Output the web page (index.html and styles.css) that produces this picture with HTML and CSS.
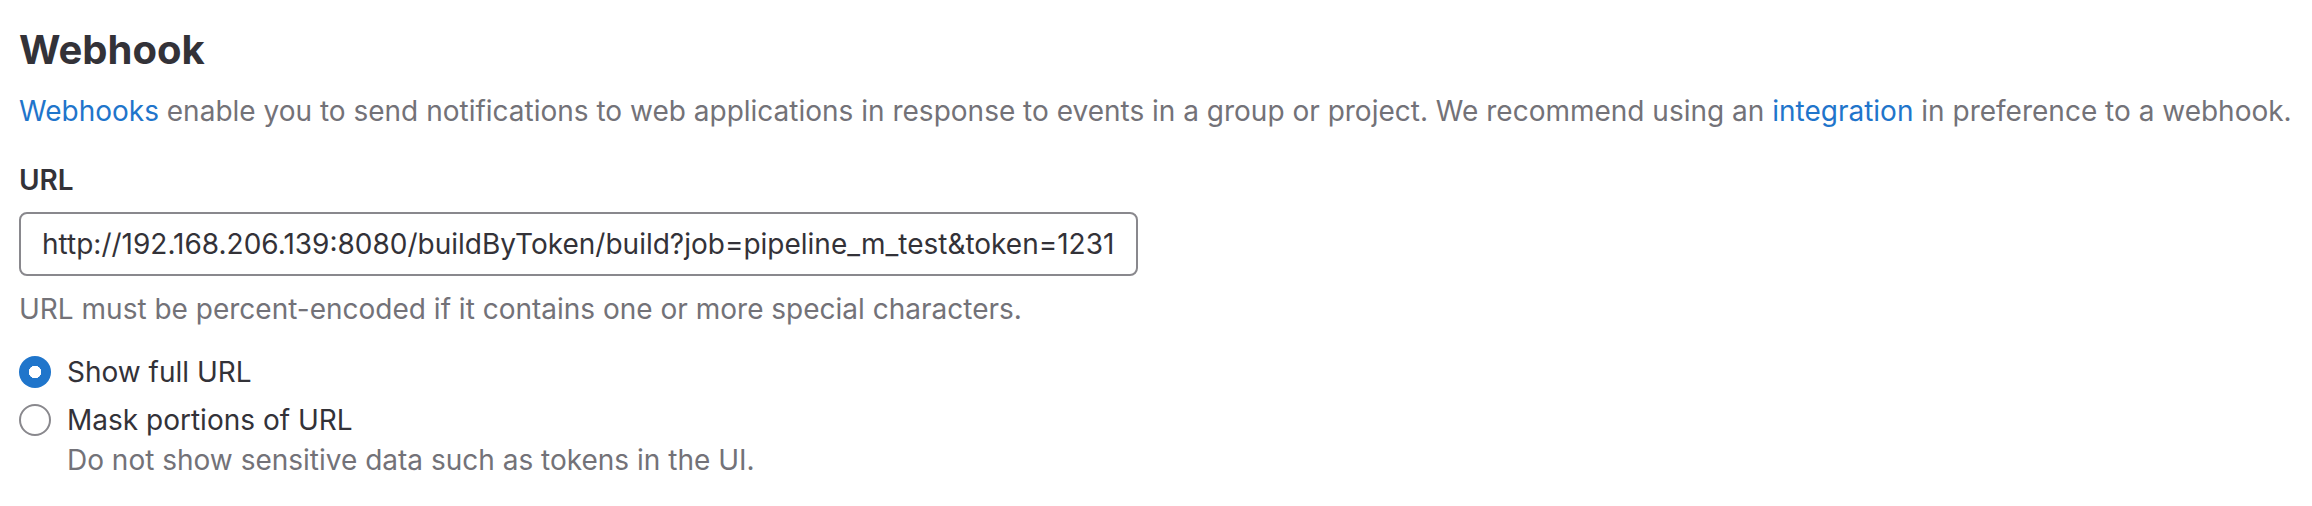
FILE: index.html
```html
<!DOCTYPE html>
<html lang="en">
<head>
<meta charset="utf-8">
<title>Webhook</title>
<link rel="stylesheet" href="styles.css">
</head>
<body>
<main class="page">
  <h2 class="title">Webhook</h2>
  <p class="intro"><a href="#" class="link">Webhooks</a> enable you to send notifications to web applications in response to events in a group or project. We recommend using an <a href="#" class="link">integration</a> in preference to a webhook.</p>
  <div class="field">
    <label class="label" for="url">URL</label>
    <input class="input" id="url" type="text" value="http://192.168.206.139:8080/buildByToken/build?job=pipeline_m_test&amp;token=123123">
    <p class="help">URL must be percent-encoded if it contains one or more special characters.</p>
  </div>
  <div class="radios">
    <label class="radio">
      <span class="dot checked"></span>
      <span class="radio-text">Show full URL</span>
    </label>
    <label class="radio">
      <span class="dot"></span>
      <span class="radio-body">
        <span class="radio-text">Mask portions of URL</span>
        <span class="radio-help">Do not show sensitive data such as tokens in the UI.</span>
      </span>
    </label>
  </div>
</main>
</body>
</html>
```
FILE: styles.css
```css
html, body {
  margin: 0;
  padding: 0;
  background: #ffffff;
}

body {
  font-family: Inter, "Noto Sans", "Liberation Sans", sans-serif;
  color: #333238;
  font-size: 28px;
  line-height: 40px;
}

.page {
  padding: 25px 0 0 19px;
}

.title {
  margin: 0;
  font-size: 40px;
  line-height: 50px;
  font-weight: 700;
  color: #333238;
}

.intro {
  margin: 16px 0 0;
  color: #737278;
  white-space: nowrap;
}

.link {
  color: #1f75cb;
  text-decoration: none;
}

.field {
  margin-top: 29px;
  display: flex;
  flex-direction: column;
  align-items: flex-start;
}

.label {
  font-weight: 600;
  color: #333238;
}

.input {
  box-sizing: border-box;
  margin-top: 12px;
  width: 1119px;
  height: 64px;
  padding: 0 21px;
  border: 2px solid #89888d;
  border-radius: 8px;
  font-family: inherit;
  font-size: 28px;
  color: #333238;
  background: #fff;
  outline: none;
}

.help {
  margin: 13px 0 0;
  color: #737278;
}

.radios {
  margin-top: 23px;
  display: flex;
  flex-direction: column;
  gap: 8px;
}

.radio {
  display: flex;
  align-items: flex-start;
  gap: 16px;
}

.dot {
  box-sizing: border-box;
  flex: none;
  width: 32px;
  height: 32px;
  margin-top: 4px;
  border-radius: 50%;
  border: 2px solid #89888d;
  background: #fff;
}

.dot.checked {
  border: none;
  background: radial-gradient(circle, #ffffff 0 6px, #1f75cb 6.5px);
}

.radio-body {
  display: flex;
  flex-direction: column;
}

.radio-text {
  color: #333238;
}

.radio-help {
  color: #737278;
}
```
